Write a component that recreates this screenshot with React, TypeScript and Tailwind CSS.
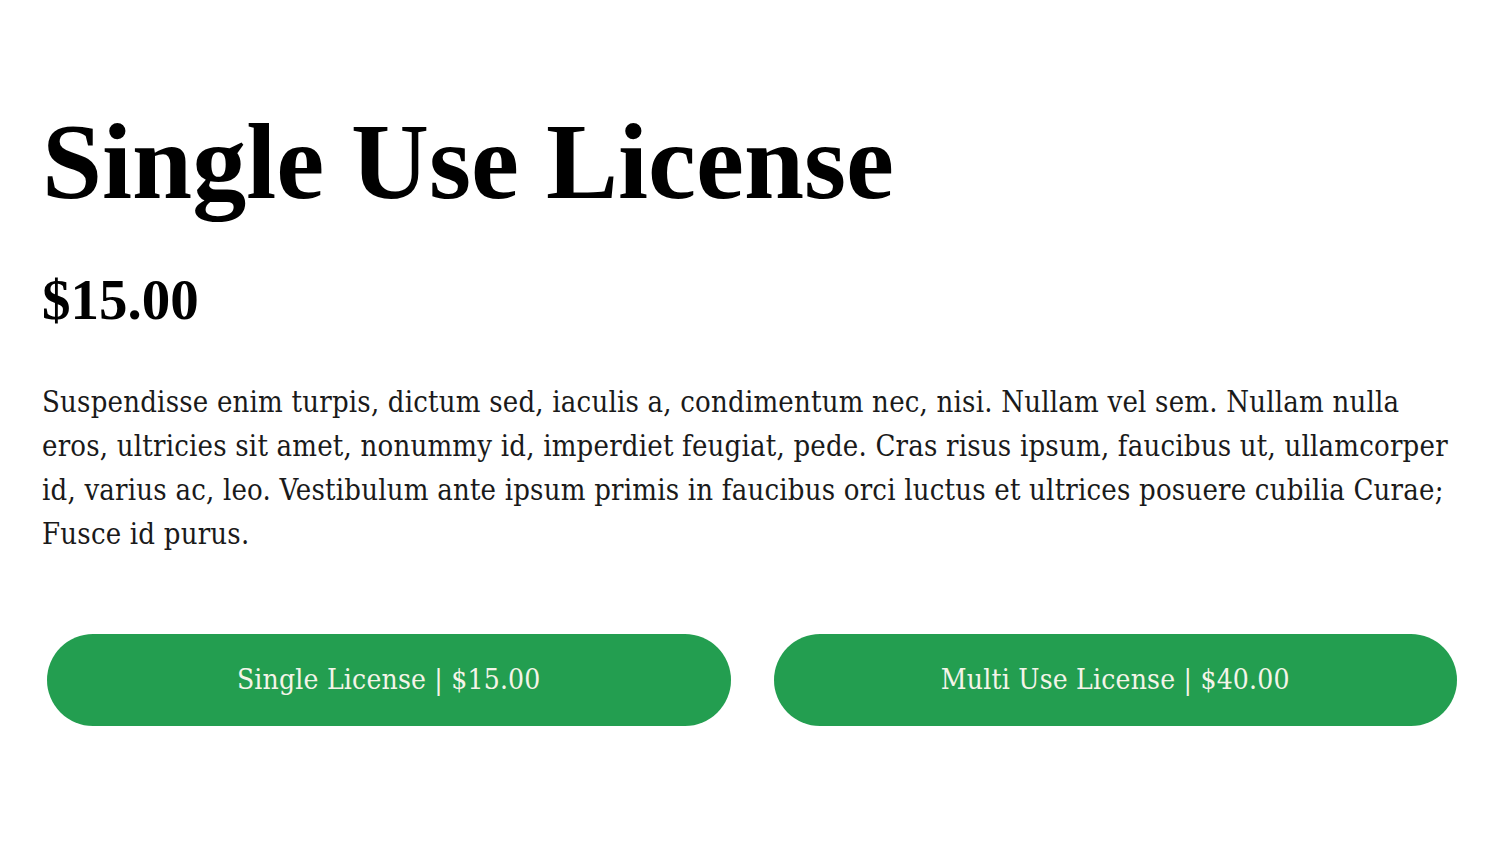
export default function App() {
  return (
    <div className="w-[1500px] h-[845px] bg-white px-[42px] pt-[102px]">
      <h1 className="font-['Liberation_Serif',serif] font-bold text-[108px] leading-[120px] text-black">
        Single Use License
      </h1>
      <div className="mt-[48px] font-['Liberation_Serif',serif] font-bold text-[57px] leading-[60px] text-black">
        $15.00
      </div>
      <p className="mt-[50px] font-['DejaVu_Serif_Condensed','DejaVu_Serif',serif] text-[29px] tracking-[0.2px] leading-[44px] text-[#1a1a1a] whitespace-nowrap">
        Suspendisse enim turpis, dictum sed, iaculis a, condimentum nec, nisi. Nullam vel sem. Nullam nulla
        <br />
        eros, ultricies sit amet, nonummy id, imperdiet feugiat, pede. Cras risus ipsum, faucibus ut, ullamcorper
        <br />
        id, varius ac, leo. Vestibulum ante ipsum primis in faucibus orci luctus et ultrices posuere cubilia Curae;
        <br />
        Fusce id purus.
      </p>
      <div className="mt-[78px] flex gap-[43px] pl-[5px] pr-[1px]">
        <button className="flex-1 h-[92px] rounded-full bg-[#239e50] text-[#f4f4e8] font-['DejaVu_Serif_Condensed','DejaVu_Serif',serif] text-[28px] tracking-[0.2px]">
          Single License | $15.00
        </button>
        <button className="flex-1 h-[92px] rounded-full bg-[#239e50] text-[#f4f4e8] font-['DejaVu_Serif_Condensed','DejaVu_Serif',serif] text-[28px] tracking-[0.2px]">
          Multi Use License | $40.00
        </button>
      </div>
    </div>
  );
}
